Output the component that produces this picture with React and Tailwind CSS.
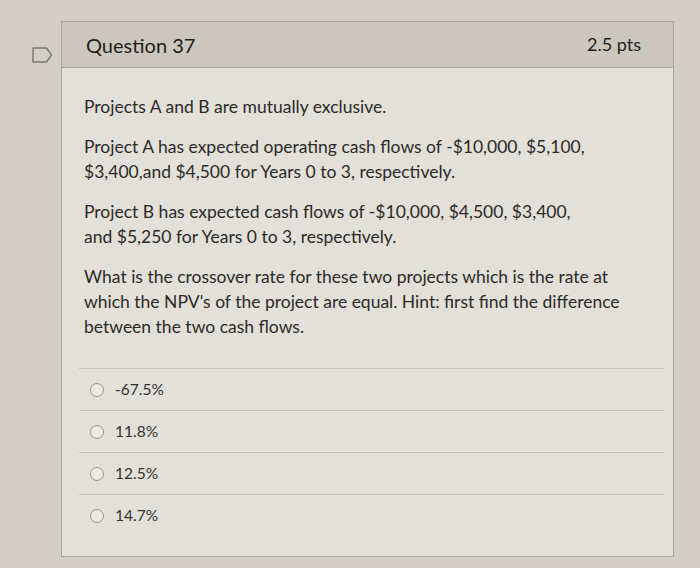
import React from "react";

const answers = ["-67.5%", "11.8%", "12.5%", "14.7%"];

function FlagIcon() {
    return (
        <svg width="21" height="16" viewBox="0 0 21 16" fill="none">
            <path
                d="M1 1 H14.5 L19.5 8 L14.5 15 H1 Z"
                stroke="#7d7a74"
                strokeWidth="1.5"
                strokeLinejoin="round"
            />
        </svg>
    );
}

export default function App() {
    return (
        <div
            className="w-[700px] h-[568px] bg-[#d3cfc6] text-[#2b2a28] overflow-hidden"
            style={{ fontFamily: "Lato, 'Open Sans', sans-serif" }}
        >
            <div className="flex pt-[21px]">
                {/* flag */}
                <div className="w-[61px] flex items-start justify-end pr-[8px] pt-[26px]">
                    <FlagIcon />
                </div>

                {/* card */}
                <div className="w-[613px] border border-[#a9a59d] bg-[#e3e0d9]">
                    {/* header */}
                    <div className="h-[46px] flex items-center justify-between pl-[24px] pr-[32px] bg-[#cbc7be] border-b border-[#a9a59d]">
                        <h2 className="text-[20px] text-[#1f1e1c]">Question 37</h2>
                        <span className="text-[18px] text-[#1f1e1c]">2.5 pts</span>
                    </div>

                    {/* question body */}
                    <div className="px-[22px] pt-[26px] pb-[29px] text-[17.5px] leading-[25px] space-y-[15px]">
                        <p>Projects A and B are mutually exclusive.</p>
                        <p>
                            Project A has expected operating cash flows of -$10,000, $5,100,
                            <br />
                            $3,400,and $4,500 for Years 0 to 3, respectively.
                        </p>
                        <p>
                            Project B has expected cash flows of -$10,000, $4,500, $3,400,
                            <br />
                            and $5,250 for Years 0 to 3, respectively.
                        </p>
                        <p>
                            What is the crossover rate for these two projects which is the rate at
                            <br />
                            which the NPV's of the project are equal. Hint: first find the difference
                            <br />
                            between the two cash flows.
                        </p>
                    </div>

                    {/* answers */}
                    <div className="ml-[17px] mr-[9px] pb-[20px]">
                        {answers.map((a) => (
                            <div
                                key={a}
                                className="h-[42px] flex items-center border-t border-[#c6c2ba] pl-[11px]"
                            >
                                <span className="w-[14px] h-[14px] rounded-full border border-[#97948e] bg-[#ebe9e3]" />
                                <span className="ml-[11px] text-[15.5px] text-[#333230]">{a}</span>
                            </div>
                        ))}
                    </div>
                </div>
            </div>
        </div>
    );
}
